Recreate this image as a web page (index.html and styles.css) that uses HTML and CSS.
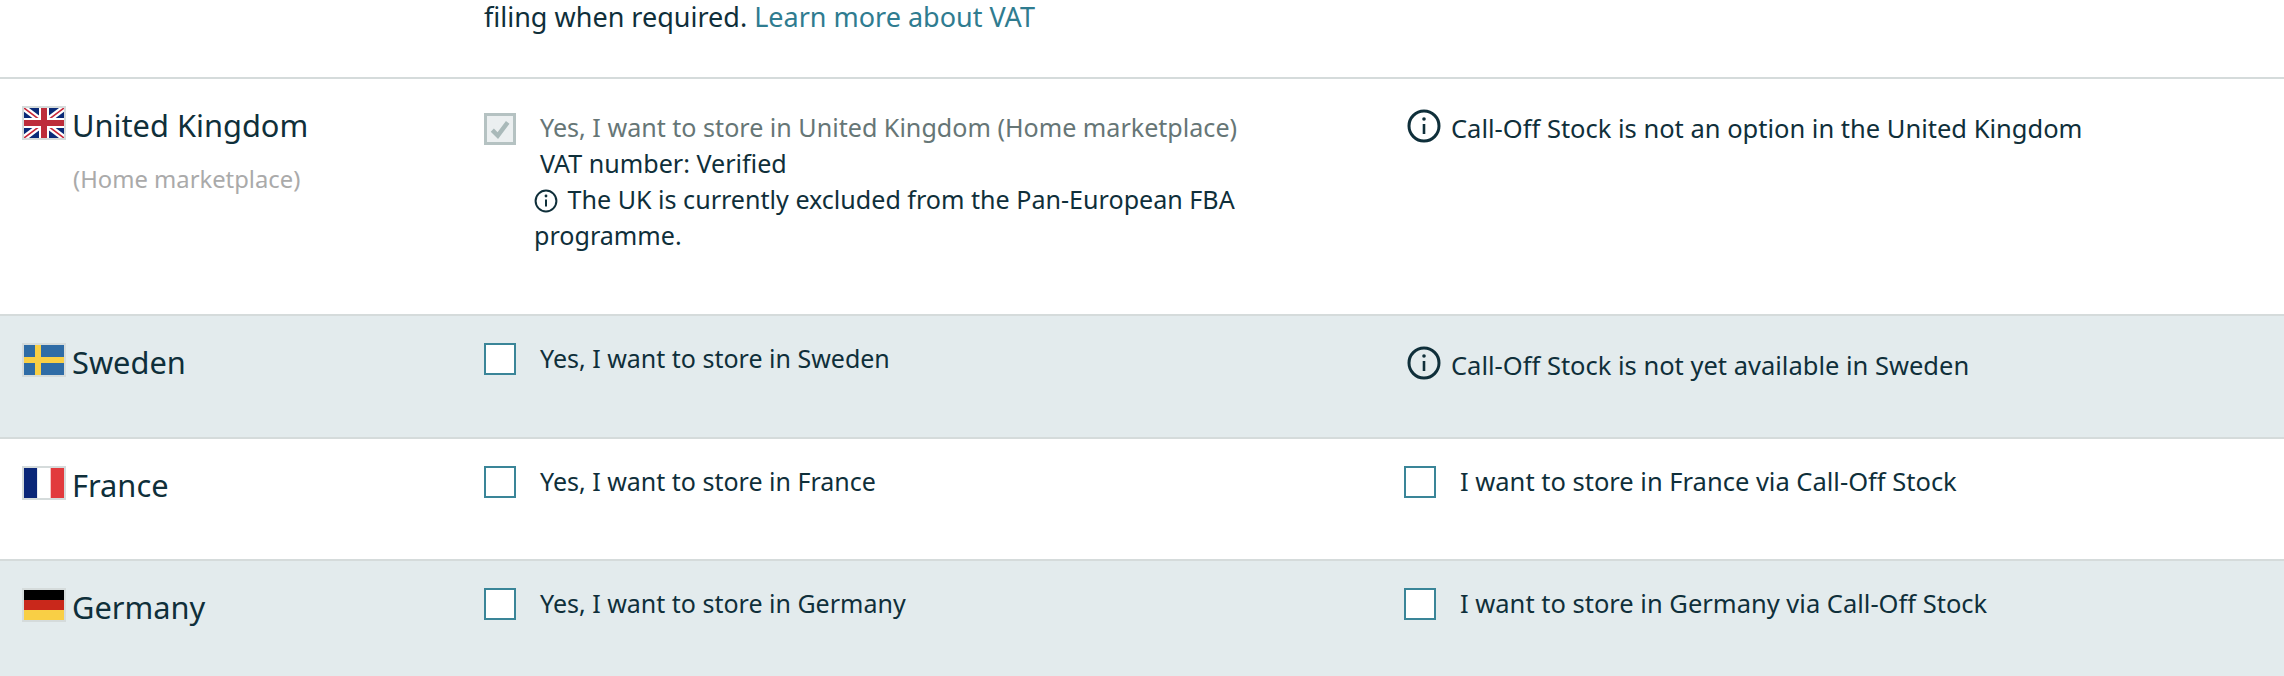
FILE: index.html
```html
<!DOCTYPE html>
<html lang="en">
<head>
<meta charset="utf-8">
<title>Pan-European FBA</title>
<link rel="stylesheet" href="styles.css">
</head>
<body>
<div class="intro"><p class="intro-text">filing when required. <a class="link" href="#">Learn more about VAT</a></p></div>

<section class="row row-home">
  <div class="country">
    <svg class="flag" viewBox="0 0 40 30"><rect width="40" height="30" fill="#0a2a78"/><path d="M0 0L40 30M40 0L0 30" stroke="#fff" stroke-width="6"/><path d="M0 0L40 30M40 0L0 30" stroke="#c8283a" stroke-width="1.6"/><path d="M20 0V30M0 15H40" stroke="#fff" stroke-width="10"/><path d="M20 0V30M0 15H40" stroke="#bd2c3a" stroke-width="6"/></svg>
    <div><h2 class="country-name">United Kingdom</h2><p class="country-note">(Home marketplace)</p></div>
  </div>
  <div class="option option-home">
    <span class="box box-disabled"><svg class="tick" viewBox="0 0 20 20"><path d="M3 11l5 5 9-12" fill="none" stroke="#a9b9b9" stroke-width="4"/></svg></span>
    <div class="option-body">
      <p class="line line-disabled">Yes, I want to store in United Kingdom (Home marketplace)</p>
      <p class="line">VAT number: Verified</p>
      <p class="line note"><svg class="info info-small" viewBox="0 0 24 24"><circle cx="12" cy="12" r="10.4" fill="none" stroke="currentColor" stroke-width="2"/><path d="M12 10.5v7" stroke="currentColor" stroke-width="2"/><circle cx="12" cy="7" r="1.4" fill="currentColor"/></svg> The UK is currently excluded from the Pan-European FBA programme.</p>
    </div>
  </div>
  <div class="notice">
    <svg class="info info-large" viewBox="0 0 34 34"><circle cx="17" cy="17" r="15" fill="none" stroke="currentColor" stroke-width="3"/><path d="M17 15v10" stroke="currentColor" stroke-width="2.6"/><circle cx="17" cy="10" r="1.8" fill="currentColor"/></svg>
    <p class="line notice-text">Call-Off Stock is not an option in the United Kingdom</p>
  </div>
</section>

<section class="row row-band">
  <div class="country">
    <svg class="flag" viewBox="0 0 40 30"><rect width="40" height="30" fill="#2f6ca6"/><path d="M11 0h6v30h-6zM0 12h40v6H0z" fill="#f9cf45"/></svg>
    <h2 class="country-name">Sweden</h2>
  </div>
  <div class="option"><span class="box"></span><div class="option-body"><p class="line">Yes, I want to store in Sweden</p></div></div>
  <div class="notice">
    <svg class="info info-large" viewBox="0 0 34 34"><circle cx="17" cy="17" r="15" fill="none" stroke="currentColor" stroke-width="3"/><path d="M17 15v10" stroke="currentColor" stroke-width="2.6"/><circle cx="17" cy="10" r="1.8" fill="currentColor"/></svg>
    <p class="line notice-text">Call-Off Stock is not yet available in Sweden</p>
  </div>
</section>

<section class="row row-short">
  <div class="country">
    <svg class="flag" viewBox="0 0 40 30"><rect width="13.3" height="30" fill="#0a2678"/><rect x="13.3" width="13.4" height="30" fill="#fff"/><rect x="26.7" width="13.3" height="30" fill="#e23a3d"/></svg>
    <h2 class="country-name">France</h2>
  </div>
  <div class="option"><span class="box"></span><div class="option-body"><p class="line">Yes, I want to store in France</p></div></div>
  <div class="option option-stock"><span class="box"></span><div class="option-body"><p class="line">I want to store in France via Call-Off Stock</p></div></div>
</section>

<section class="row row-band row-last">
  <div class="country">
    <svg class="flag" viewBox="0 0 40 30"><rect width="40" height="10" fill="#000"/><rect y="10" width="40" height="10" fill="#c9281b"/><rect y="20" width="40" height="10" fill="#f9cf45"/></svg>
    <h2 class="country-name">Germany</h2>
  </div>
  <div class="option"><span class="box"></span><div class="option-body"><p class="line">Yes, I want to store in Germany</p></div></div>
  <div class="option option-stock"><span class="box"></span><div class="option-body"><p class="line">I want to store in Germany via Call-Off Stock</p></div></div>
</section>
</body>
</html>
```
FILE: styles.css
```css
* { box-sizing: border-box; }
html, body { margin: 0; padding: 0; }
body {
  background: #fff;
  color: #0f2f3a;
  font-family: "Noto Sans", "Open Sans", sans-serif;
  font-size: 25px;
  line-height: 36px;
  overflow: hidden;
}
p, h2 { margin: 0; font-weight: 400; }
.intro { height: 77px; padding-left: 484px; }
.intro-text { font-size: 27px; line-height: 34px; }
.link { color: #2f7c90; text-decoration: none; }
.row {
  display: grid;
  grid-template-columns: 462px 920px 1fr;
  height: 123px;
  padding: 27px 0 0 22px;
  border-top: 2px solid #d5dbdb;
}
.row-home { height: 237px; }
.row-short { height: 122px; }
.row-band { background: #e3ebed; }
.row-last { height: 117px; }
.country { display: flex; align-items: flex-start; gap: 6px; }
.flag { display: block; flex: none; width: 44px; height: 34px; border: 2px solid #d5dbdb; }
.country-name { font-size: 30.8px; line-height: 38px; }
.country-note { margin-top: 17px; padding-left: 1px; color: #aaaaaa; font-size: 23.8px; line-height: 36px; }
.option { display: flex; align-items: flex-start; }
.option-home { padding-top: 7px; }
.option-home .option-body { margin-top: -4px; font-size: 25.1px; }
.option-stock { font-size: 25.5px; }
.box { display: block; flex: none; width: 32px; height: 32px; background: #fff; border: 2px solid #3a8598; }
.box-disabled { background: #ebeff0; border: 3px solid #b5c2c2; padding: 2px; }
.tick { display: block; width: 100%; height: 100%; }
.option-body { margin: -3px 0 0 24px; max-width: 720px; }
.line-disabled { color: #667676; }
.note { margin-left: -6px; }
.info { vertical-align: -4px; }
.info-small { width: 24px; height: 24px; margin-right: 3px; }
.info-large { display: block; flex: none; width: 34px; height: 34px; }
.notice { display: flex; align-items: flex-start; gap: 10px; padding: 3px 0 0 3px; }
.notice-text { margin-top: 1px; font-size: 25.5px; }
```
